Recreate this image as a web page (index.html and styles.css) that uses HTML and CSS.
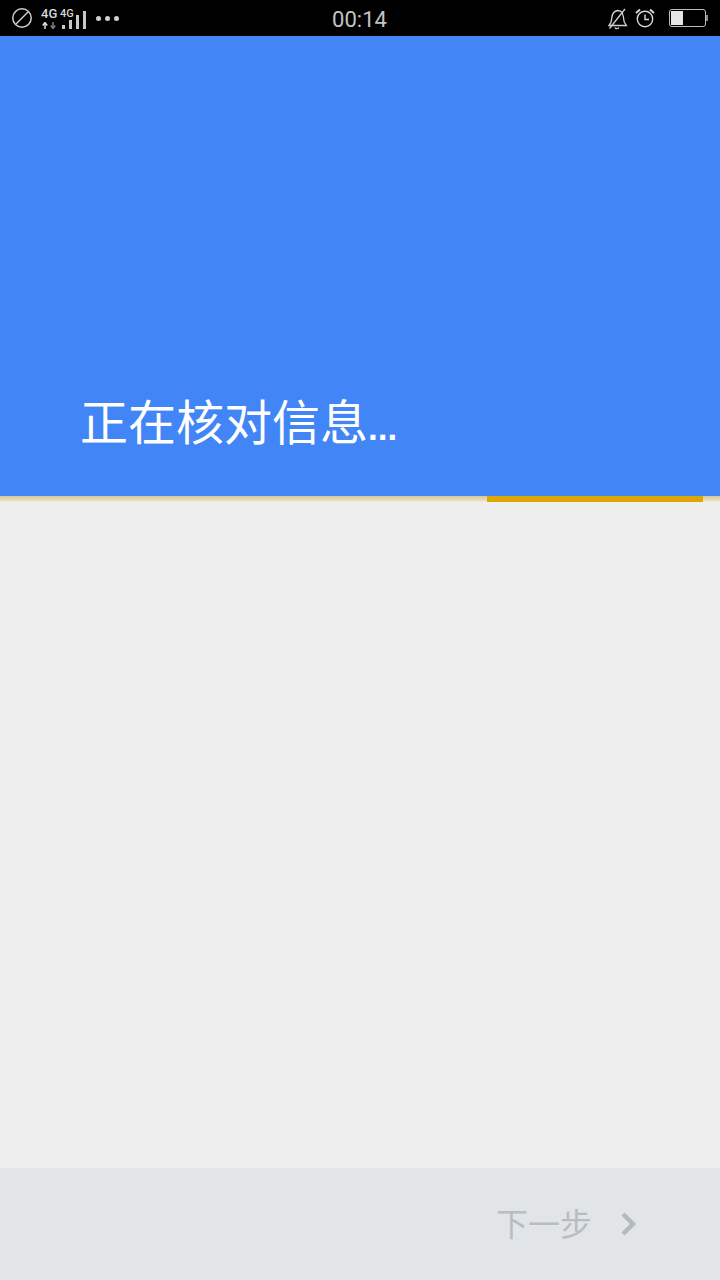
FILE: index.html
```html
<!DOCTYPE html>
<html lang="zh-CN">

<head>
    <meta charset="UTF-8">
    <meta name="viewport" content="width=device-width, initial-scale=1.0">
    <title>正在核对信息</title>
    <link rel="stylesheet" href="styles.css">
</head>

<body>
    <div class="page">
        <div class="status">
            <div class="status-left">
                <svg class="no-sim" width="22" height="22" viewBox="0 0 22 22">
                    <circle cx="11" cy="11" r="9.2" fill="none" stroke="#d0d0d0" stroke-width="1.5" />
                    <path d="M5 17 17 5" stroke="#d0d0d0" stroke-width="1.5" />
                </svg>
                <div class="signal">
                    <div class="net net-one">
                        <span class="net-text">4G</span>
                        <svg width="20" height="7" viewBox="0 0 20 7">
                            <path d="M4 7V2.500M1.800 3.500 4 .5l2.200 3" fill="none" stroke="#e0e0e0" stroke-width="1.500" />
                            <path d="M12 0v4.500M9.800 3.500 12 6.500l2.200-3" fill="none" stroke="#808080" stroke-width="1.500" />
                        </svg>
                    </div>
                    <div class="net net-two">
                        <span class="net-text small">4G</span>
                        <div class="bars">
                            <i class="bar b1"></i>
                            <i class="bar b2"></i>
                            <i class="bar b3"></i>
                            <i class="bar b4"></i>
                        </div>
                    </div>
                </div>
                <div class="dots"><i></i><i></i><i></i></div>
            </div>
            <div class="clock">00:14</div>
            <div class="status-right">
                <svg width="20" height="24" viewBox="1.500 0 20 24">
                    <path d="M2.500 19.500c2-2 2.500-4 2.800-7.500.3-4 2.700-7 6-7.500 3.200 0 5 2.500 5.500 6l.9 5.500 2.300 3.500z" fill="none" stroke="#d0d0d0" stroke-width="1.300" />
                    <path d="M8.500 21.500c.7 1.600 3 1.600 3.800 0" fill="none" stroke="#d0d0d0" stroke-width="1.300" />
                    <path d="M3 22.500 18.500 3" stroke="#d0d0d0" stroke-width="1.300" />
                </svg>
                <svg class="alarm" width="20" height="20" viewBox="0 0 20 20">
                    <circle cx="10" cy="11" r="7.700" fill="none" stroke="#d8d8d8" stroke-width="1.400" />
                    <path d="M10 6.500V11.500H14" fill="none" stroke="#d8d8d8" stroke-width="1.400" />
                    <path d="M1 5 5 1.500M15 1.500 19 5" stroke="#d8d8d8" stroke-width="2" />
                </svg>
                <div class="battery">
                    <div class="battery-body"><div class="battery-level"></div></div>
                    <div class="battery-cap"></div>
                </div>
            </div>
        </div>

        <div class="header">
            <h1 class="title">正在核对信息<span class="ellipsis">...</span></h1>
        </div>

        <div class="progress">
            <div class="progress-bar"></div>
        </div>

        <div class="content"></div>

        <div class="footer">
            <span class="next">下一步</span>
            <svg class="arrow" width="18" height="26" viewBox="0 0 18 26">
                <path d="M3 3 13 13 3 23" fill="none" stroke="#b4b9bc" stroke-width="4.500" />
            </svg>
        </div>
    </div>
</body>

</html>
```

FILE: styles.css
```css
* {
    padding: 0;
    margin: 0;
    box-sizing: border-box;
}

body {
    background-color: #eeeeee;
    font-family: "Liberation Sans", "Noto Sans CJK SC", sans-serif;
}

.page {
    width: 720px;
    height: 1280px;
    display: flex;
    flex-direction: column;
    overflow: hidden;
}

/* 状态栏 */
.status {
    height: 36px;
    background-color: #000;
    display: grid;
    grid-template-columns: 1fr auto 1fr;
    align-items: center;
    padding: 0 12px 0 11px;
    color: #d8d8d8;
}

.status-left {
    display: flex;
    align-items: center;
}

.status-right {
    display: flex;
    align-items: center;
    justify-content: flex-end;
}

.clock {
    font-family: Roboto, sans-serif;
    font-size: 22px;
    color: #c4c4c4;
    padding-top: 2px;
}

.signal {
    display: flex;
    margin-left: 8px;
}

.net {
    display: flex;
    flex-direction: column;
}

.net-one {
    width: 19px;
    gap: 2px;
}

.net-two {
    position: relative;
    width: 27px;
    height: 21px;
}

.net-text {
    font-family: Roboto, sans-serif;
    font-size: 13px;
    font-weight: 500;
    line-height: 12px;
    color: #d8d8d8;
}

.net-text.small {
    font-size: 11px;
    line-height: 11px;
}

.bars {
    position: absolute;
    left: 2px;
    bottom: 0;
    display: flex;
    align-items: flex-end;
    gap: 4px;
    height: 18px;
}

.bar {
    display: block;
    width: 3px;
    background-color: #c8c8c8;
}

.b1 { height: 4px; }
.b2 { height: 9px; }
.b3 { height: 14px; }
.b4 { height: 18px; }

.dots {
    display: flex;
    gap: 4px;
    margin-left: 9px;
}

.dots i {
    width: 5px;
    height: 5px;
    border-radius: 50%;
    background-color: #d0d0d0;
}

.alarm {
    margin-left: 7px;
}

.battery {
    display: flex;
    align-items: center;
    margin-left: 14px;
}

.battery-body {
    width: 37px;
    height: 18px;
    border: 1.5px solid #bdbdbd;
    border-radius: 3px;
    padding: 1px;
}

.battery-level {
    width: 12px;
    height: 100%;
    background-color: #e4e4e4;
}

.battery-cap {
    width: 2px;
    height: 6px;
    background-color: #8a8a8a;
}

/* 蓝色头部 */
.header {
    height: 460px;
    background-color: #4285f6;
    padding: 362px 0 0 80px;
}

.title {
    font-size: 48px;
    font-weight: normal;
    line-height: 52px;
    color: #fff;
}

.ellipsis {
    font-size: 35px;
    font-weight: bold;
}

.progress {
    height: 6px;
    background: linear-gradient(#d9c690, #e8e0c8 80%, #eeeeee);
    padding-left: 487px;
    padding-right: 17px;
}

.progress-bar {
    height: 100%;
    background-color: #dea704;
}

.content {
    flex: 1;
    background-color: #eeeeee;
}

/* 底部 */
.footer {
    height: 112px;
    background-color: #e1e5e8;
    display: flex;
    align-items: center;
    justify-content: flex-end;
    padding: 0 82px 4px 0;
}

.next {
    font-size: 32px;
    color: #b8bdc0;
}

.arrow {
    margin: 4px 0 0 28px;
}
```
